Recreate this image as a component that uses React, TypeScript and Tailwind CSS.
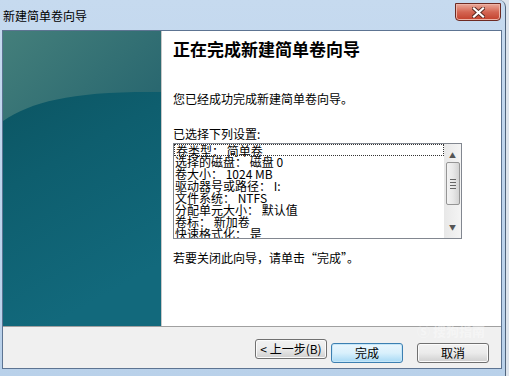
import React from 'react'

const items = [
  '卷类型： 简单卷',
  '选择的磁盘： 磁盘 0',
  '卷大小： 1024 MB',
  '驱动器号或路径： I:',
  '文件系统： NTFS',
  '分配单元大小： 默认值',
  '卷标： 新加卷',
  '快速格式化： 是',
]

const SidePanel = () => (
  <svg width="158" height="295" viewBox="0 0 158 295" className="block">
    <defs>
      <linearGradient id="lower" x1="0" y1="0" x2="0.3" y2="1">
        <stop offset="0" stopColor="#0a505c" />
        <stop offset="0.5" stopColor="#0e5e6e" />
        <stop offset="1" stopColor="#12697c" />
      </linearGradient>
      <linearGradient id="upper" x1="0" y1="0" x2="1" y2="0.6">
        <stop offset="0" stopColor="#447f7b" />
        <stop offset="1" stopColor="#2a6870" />
      </linearGradient>
    </defs>
    <rect width="158" height="295" fill="url(#lower)" />
    <path d="M0 90 C 30 70, 70 60, 158 61 L158 0 L0 0 Z" fill="url(#upper)" />
  </svg>
)

const Button = ({ label, primary }: { label: string; primary?: boolean }) => (
  <button
    className={
      primary
        ? 'h-[20px] w-[72px] rounded-[3px] border border-[#3c7fb1] bg-gradient-to-b from-[#eaf6fd] via-[#d9f0fc] to-[#a7d9f5] text-[12px] leading-none text-black shadow-[inset_0_0_0_1px_#c5e6f8]'
        : 'h-[20px] w-[72px] rounded-[3px] border border-[#707070] bg-gradient-to-b from-[#f2f2f2] via-[#ebebeb] to-[#cfcfcf] text-[12px] leading-none text-black shadow-[inset_0_0_0_1px_#fbfbfb]'
    }
  >
    {label}
  </button>
)

export default function App() {
  return (
    <div
      className="w-[509px] h-[376px] overflow-hidden bg-[#dde4ec]"
      style={{ fontFamily: '"Noto Sans CJK SC", "Noto Sans", sans-serif' }}
    >
      <div className="w-[506px] h-[380px] rounded-tr-[7px] border-r border-[#50647c] bg-gradient-to-b from-[#c6daef] via-[#bed4ec] to-[#b9d1ea]">
        {/* title bar */}
        <div className="h-[30px] flex justify-between pl-[3px] pr-[4px]">
          <span className="mt-[9px] text-[12px] leading-[14px] text-black">新建简单卷向导</span>
          <div className="mt-[3px] w-[46px] h-[18px] rounded-b-[4px] border border-[#6d2a22] bg-gradient-to-b from-[#e9a99b] via-[#d46552] to-[#c2402b] flex items-center justify-center shadow-[inset_0_0_0_1px_#eeb3a6]">
            <svg width="13" height="11" viewBox="0 0 13 11">
              <path d="M2 1.5 L11 9.5 M11 1.5 L2 9.5" stroke="#5a2a22" strokeWidth="4" strokeLinecap="square" />
              <path d="M2 1.5 L11 9.5 M11 1.5 L2 9.5" stroke="#ffffff" strokeWidth="2.2" strokeLinecap="square" />
            </svg>
          </div>
        </div>

        {/* client area */}
        <div className="ml-[2px] w-[500px] border border-[#5d7492] bg-[#f0f0f0]">
          <div className="flex h-[295px]">
            <div className="w-[158px] shrink-0">
              <SidePanel />
            </div>
            <div className="flex-1 border-l border-[#c8c8c8] bg-white pl-[11px] pt-[8px] text-black">
              <h1 className="text-[17px] leading-[20px] font-bold">正在完成新建简单卷向导</h1>
              <p className="mt-[32px] text-[12px] leading-[16px]">您已经成功完成新建简单卷向导。</p>
              <p className="mt-[19px] text-[12px] leading-[16px]">已选择下列设置:</p>
              <div className="mt-[1px] w-[289px] h-[96px] border border-[#828790] flex">
                <div className="flex-1 pl-[1px] pt-[1px] overflow-hidden text-[12px] leading-[12px]">
                  {items.map((t, i) => (
                    <div
                      key={t}
                      className={
                        i === 0
                          ? 'h-[12px] whitespace-nowrap border border-dotted border-[#333] -mt-[1px] -ml-[1px] pl-[1px]'
                          : 'h-[12px] whitespace-nowrap'
                      }
                    >
                      {t}
                    </div>
                  ))}
                </div>
                <div className="w-[17px] flex flex-col items-center bg-gradient-to-r from-[#e8e8e8] to-[#f4f4f4]">
                  <span className="mt-[7px] text-[7px] leading-[8px] text-[#555]">▲</span>
                  <div className="mt-[3px] w-[14px] h-[43px] rounded-[2px] border border-[#959595] bg-gradient-to-r from-[#f3f3f3] via-[#e8e8e8] to-[#d3d3d3] flex flex-col items-center justify-center gap-[2px]">
                    <span className="w-[6px] h-[1px] bg-[#666]" />
                    <span className="w-[6px] h-[1px] bg-[#666]" />
                    <span className="w-[6px] h-[1px] bg-[#666]" />
                    <span className="w-[6px] h-[1px] bg-[#666]" />
                  </div>
                  <span className="mt-auto mb-[7px] text-[7px] leading-[8px] text-[#555]">▼</span>
                </div>
              </div>
              <p className="mt-[11px] text-[12px] leading-[16px]">若要关闭此向导，请单击“完成”。</p>
            </div>
          </div>
          <div className="h-[42px] border-t border-[#a0a0a0] flex items-start pt-[12px] pr-[12px] justify-end relative">
            <span className="absolute right-[16px] top-[-3px] text-[13px] leading-[14px] text-white/40 font-bold">Ⓢ 搜狗指南</span>
            <Button label="< 上一步(B)" />
            <div className="ml-[4px]">
              <Button label="完成" primary />
            </div>
            <div className="ml-[14px]">
              <Button label="取消" />
            </div>
          </div>
        </div>
      </div>
    </div>
  )
}
